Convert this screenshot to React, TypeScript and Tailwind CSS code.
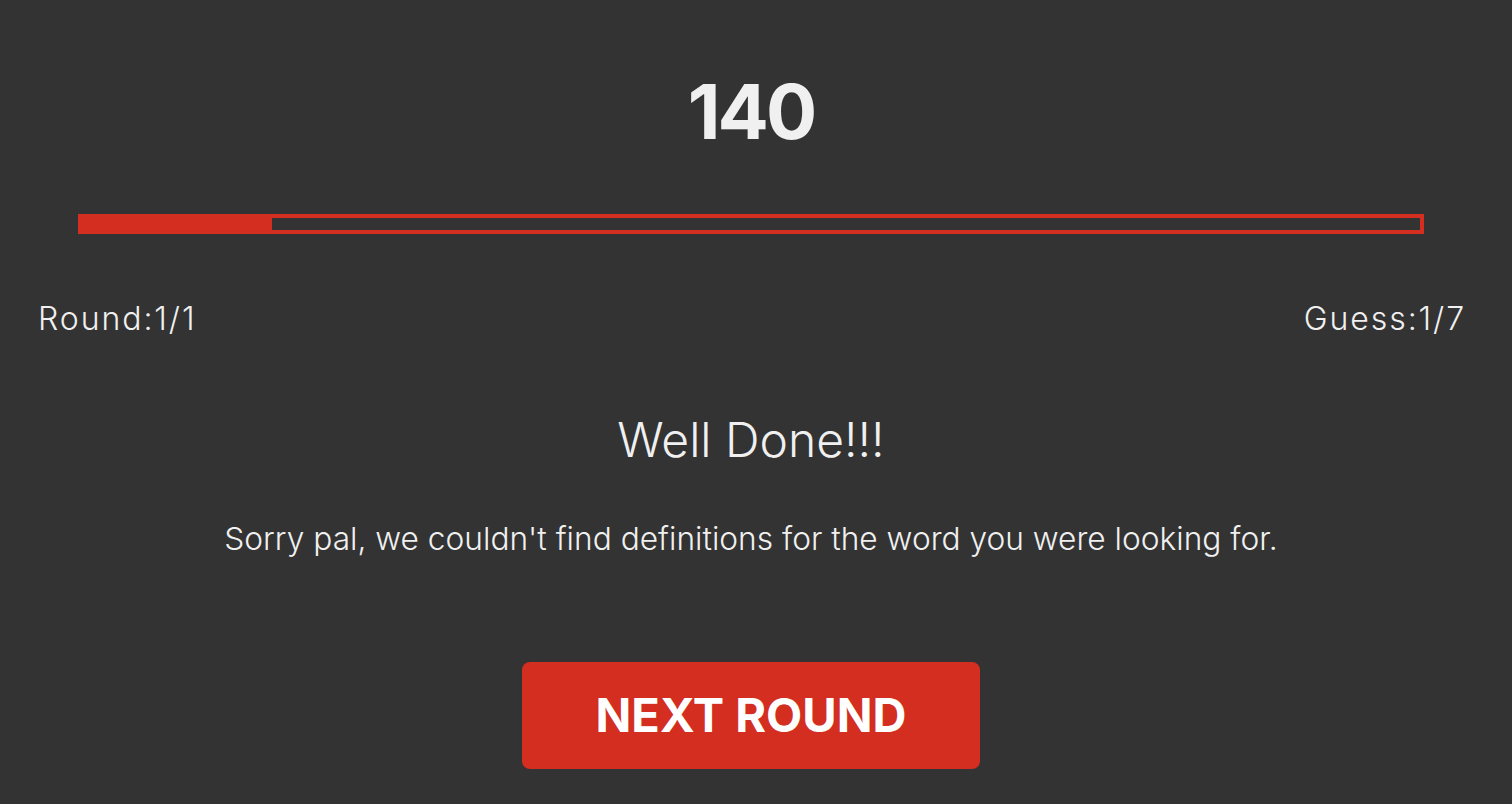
export default function App() {
  const progress = 195 / 1346

  return (
    <div className="min-h-screen w-full bg-[#333333] text-[#f0f0f0] font-['Inter','Liberation_Sans',sans-serif]">
      <div className="w-[1502px] flex flex-col">
        <h1 className="pt-[73px] text-center text-[76px] leading-none font-bold tracking-[-0.04em]">140</h1>

        <div className="mt-[65px] mx-[78px] h-[20px] border-4 border-[#d32e1f] relative">
          <div
            className="absolute -left-[4px] -top-[4px] -bottom-[4px] bg-[#d32e1f]"
            style={{ width: `${progress * 100}%` }}
          />
        </div>

        <div className="mt-[69px] pl-[38px] pr-[36px] flex justify-between text-[32px] leading-none font-light tracking-[0.06em]">
          <span>Round:1/1</span>
          <span>Guess:1/7</span>
        </div>

        <h2 className="mt-[81px] text-center text-[48px] leading-none font-light">Well Done!!!</h2>

        <p className="mt-[59px] text-center text-[31.7px] leading-none font-light">
          Sorry pal, we couldn't find definitions for the word you were looking for.
        </p>

        <div className="mt-[107px] flex justify-center">
          <button className="w-[458px] h-[107px] rounded-lg bg-[#d32e1f] text-white text-[47px] font-bold flex items-center justify-center">
            NEXT ROUND
          </button>
        </div>
      </div>
    </div>
  )
}
